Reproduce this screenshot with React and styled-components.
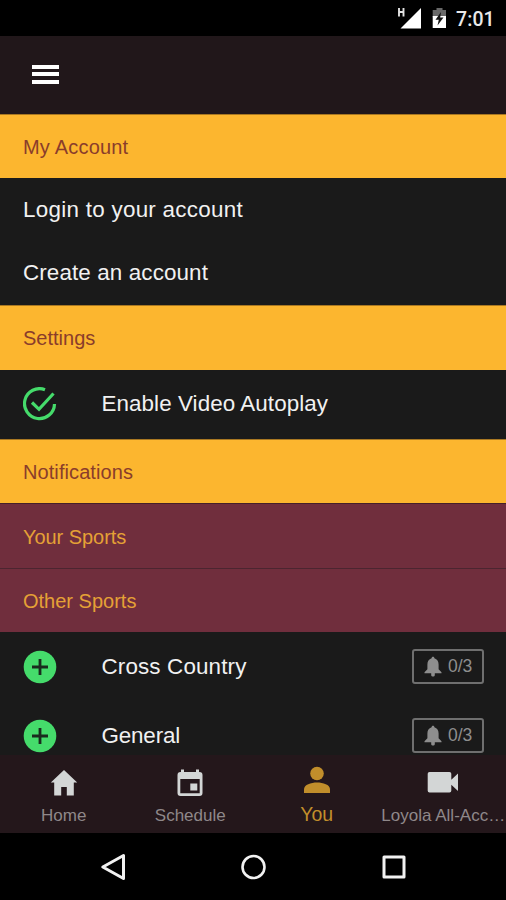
import React from "react";
import styled, { createGlobalStyle } from "styled-components";

const GlobalStyle = createGlobalStyle`
  * { box-sizing: border-box; }
  html, body { margin: 0; padding: 0; background: #000; }
  body { overflow: hidden; font-family: "Liberation Sans", Arial, sans-serif; }
  svg { display: block; flex: none; }
`;

const Screen = styled.div`
  width: 506px;
  height: 900px;
  display: flex;
  flex-direction: column;
  overflow: hidden;
  background: #1a1a1a;
`;

const StatusBar = styled.div`
  flex: none;
  height: 36px;
  padding: 0 11px 0 0;
  display: flex;
  justify-content: flex-end;
  align-items: center;
  background: #000;
`;

const StatusIcons = styled.span`
  display: flex;
  align-items: center;
  gap: 9px;
`;

const Clock = styled.span`
  width: 39px;
  margin-left: 9px;
  padding-top: 3px;
  font: 500 19.5px/24px Roboto, sans-serif;
  letter-spacing: 0.1px;
  color: #e9e9e9;
  white-space: nowrap;
`;

const AppBar = styled.header`
  flex: none;
  height: 78px;
  padding: 0 32px 2px;
  display: flex;
  align-items: center;
  background: #21171a;
`;

const MenuButton = styled.button`
  width: 27px;
  height: 19px;
  padding: 0;
  border: 0;
  background: none;
  display: flex;
  flex-direction: column;
  justify-content: space-between;
`;

const MenuBar = styled.span`
  width: 100%;
  height: 4px;
  background: #fff;
`;

const Content = styled.main`
  flex: 1;
  min-height: 0;
  overflow: hidden;
`;

const SectionHeader = styled.h2`
  margin: 0;
  height: ${(p) => p.$height}px;
  padding: ${(p) => p.$top || 0}px 23px 0;
  display: flex;
  align-items: center;
  border-top: 1px solid ${(p) => p.$edge || "#a97822"};
  background: #fcb62f;
  font-size: 20px;
  font-weight: 400;
  letter-spacing: ${(p) => p.$spacing || 0}px;
  color: #8a3d2b;
`;

const SportsHeader = styled(SectionHeader)`
  background: #702e3d;
  color: #e5a136;
`;

const Row = styled.div`
  height: ${(p) => p.$height}px;
  padding: 0 22px ${(p) => p.$bottom || 0}px 23px;
  display: flex;
  align-items: center;
  background: #1a1a1a;
`;

const RowIcon = styled.span`
  width: 78.5px;
  flex: none;
`;

const RowLabel = styled.span`
  flex: 1;
  font-size: 22.4px;
  line-height: 28px;
  letter-spacing: ${(p) => p.$spacing || 0}px;
  color: #f1f1f1;
  white-space: nowrap;
`;

const AlertBadge = styled.span`
  width: 72px;
  height: 35px;
  border: 2px solid #6f6f6f;
  border-radius: 3px;
  display: flex;
  align-items: center;
  padding-left: 10px;
  gap: 6px;
  font-size: 17.5px;
  color: #8e8e8e;
`;

const TabBar = styled.nav`
  flex: none;
  height: 78px;
  display: grid;
  grid-template-columns: repeat(4, 126.5px);
  background: #24171b;
`;

const Tab = styled.div`
  min-width: 0;
  padding: ${(p) => (p.$active ? 7 : 14)}px 0 0 1px;
  display: flex;
  flex-direction: column;
  align-items: center;
  color: ${(p) => (p.$active ? "#c18e2b" : "#d3d6d6")};
`;

const TabLabel = styled.span`
  margin-top: ${(p) => (p.$active ? 10 : 8)}px;
  font-size: ${(p) => (p.$active ? 19.5 : 17)}px;
  line-height: 22px;
  color: ${(p) => (p.$active ? "#c18e2b" : "#8f888a")};
  white-space: nowrap;
`;

const SystemBar = styled.footer`
  flex: none;
  height: 67px;
  padding: 0 98px 0 99px;
  display: flex;
  align-items: center;
  justify-content: space-between;
  background: #000;
`;

const SignalIcon = () => (
  <svg width="26" height="24" viewBox="0 0 26 24">
    <path d="M24 2V22.5H3.500Z" fill="#fff" />
    <path d="M2 2v8.500M6.500 2v8.500M2 6h4.500" stroke="#e2e2e2" strokeWidth="1.900" fill="none" />
  </svg>
);

const BatteryIcon = () => (
  <svg width="15" height="22" viewBox="0 0 15 22">
    <path d="M4.500 1h6v2H14v7H.700V3h3.800Z" fill="#686868" />
    <path d="M.700 9H14v12H.700Z" fill="#fff" />
    <path d="M9 5 3.500 12.800h3.300L5.500 18.500l6-8H8.200Z" fill="#111" />
  </svg>
);

const CheckIcon = () => (
  <svg width="34" height="34" viewBox="0 0 34 34" fill="none" stroke="#45db6b" strokeWidth="3.200">
    <path d="M22 2.700A15 15 0 1 0 31.500 17" />
    <path d="m9 15.500 7 6.800L30.500 6.500" />
  </svg>
);

const PlusIcon = () => (
  <svg width="34" height="34" viewBox="0 0 34 34">
    <circle cx="17" cy="17" r="16.300" fill="#45db6b" />
    <path d="M17 9v16M9 17h16" stroke="#1a2a1e" strokeWidth="2.800" />
  </svg>
);

const BellIcon = () => (
  <svg width="18" height="21" viewBox="0 0 18 21" fill="#8e8e8e">
    <path d="M9 .800c.9 0 1.400.6 1.400 1.500C13.200 3.200 14.600 5.500 14.600 8.500v4.700l2.900 3v1H.500v-1l2.900-3V8.500C3.400 5.500 4.800 3.200 7.600 2.300 7.600 1.400 8.100.8 9 .8Z" />
    <path d="M7.200 17h3.600v2c0 2-3.600 2-3.600 0Z" />
  </svg>
);

const HomeIcon = () => (
  <svg width="28" height="28" viewBox="0 0 28 28" fill="currentColor">
    <path d="M14 1 0.800 13.500H4.200V26.500H11.200V18h5.600v8.500h7V13.500h3.400Z" />
  </svg>
);

const CalendarIcon = () => (
  <svg width="28" height="28" viewBox="0 0 28 28" fill="currentColor">
    <path
      fillRule="evenodd"
      d="M5 .500h3V3h12V.500h3V3h.500a3 3 0 0 1 3 3v18a3 3 0 0 1-3 3h-19a3 3 0 0 1-3-3V6a3 3 0 0 1 3-3H5ZM4.300 10v14.300h19.400V10ZM14.300 14.500h7V21.500h-7Z"
    />
  </svg>
);

const PersonIcon = () => (
  <svg width="28" height="31" viewBox="0 0 28 31" fill="currentColor">
    <circle cx="14" cy="11.500" r="6.800" />
    <path d="M1 31v-3.500C1 22.500 8 20.500 14 20.500s13 2 13 7V31Z" />
  </svg>
);

const VideoIcon = () => (
  <svg width="32" height="28" viewBox="0 0 32 28" fill="currentColor">
    <path d="M2.500 3h20A1.800 1.800 0 0 1 24.300 4.800v6L31 4.500v17.500l-6.700-6.300v6A1.800 1.800 0 0 1 22.500 23.500h-20A1.800 1.800 0 0 1 .700 21.700V4.800A1.800 1.800 0 0 1 2.500 3Z" />
  </svg>
);

const sports = [
  { name: "Cross Country", spacing: 0.15 },
  { name: "General", spacing: -0.15 },
];

const tabs = [
  { label: "Home", Icon: HomeIcon },
  { label: "Schedule", Icon: CalendarIcon },
  { label: "You", Icon: PersonIcon, active: true },
  { label: "Loyola All-Acc…", Icon: VideoIcon },
];

export default function App() {
  return (
    <>
      <GlobalStyle />
      <Screen>
        <StatusBar>
          <StatusIcons>
            <SignalIcon />
            <BatteryIcon />
          </StatusIcons>
          <Clock>7:01</Clock>
        </StatusBar>
        <AppBar>
          <MenuButton aria-label="Menu">
            <MenuBar />
            <MenuBar />
            <MenuBar />
          </MenuButton>
        </AppBar>
        <Content>
          <SectionHeader $height={64} $top={2} $spacing={0.2}>My Account</SectionHeader>
          <Row $height={64}>
            <RowLabel $spacing={0.28}>Login to your account</RowLabel>
          </Row>
          <Row $height={63} $bottom={2}>
            <RowLabel $spacing={0.12}>Create an account</RowLabel>
          </Row>
          <SectionHeader $height={65}>Settings</SectionHeader>
          <Row $height={69} $bottom={2}>
            <RowIcon><CheckIcon /></RowIcon>
            <RowLabel $spacing={0.08}>Enable Video Autoplay</RowLabel>
          </Row>
          <SectionHeader $height={64} $top={2} $spacing={0.08}>Notifications</SectionHeader>
          <SportsHeader $height={65} $edge="#45202a" $top={2} $spacing={-0.05}>Your Sports</SportsHeader>
          <SportsHeader $height={64} $edge="#4c2530" $top={2}>Other Sports</SportsHeader>
          {sports.map(({ name, spacing }) => (
            <Row key={name} $height={69}>
              <RowIcon><PlusIcon /></RowIcon>
              <RowLabel $spacing={spacing}>{name}</RowLabel>
              <AlertBadge>
                <BellIcon />
                0/3
              </AlertBadge>
            </Row>
          ))}
        </Content>
        <TabBar>
          {tabs.map(({ label, Icon, active }) => (
            <Tab key={label} $active={active}>
              <Icon />
              <TabLabel $active={active}>{label}</TabLabel>
            </Tab>
          ))}
        </TabBar>
        <SystemBar>
          <svg width="28" height="30" viewBox="0 0 28 30" fill="none" stroke="#f2f2f2" strokeWidth="3" strokeLinejoin="round">
            <path d="M24.500 3.500v23L3.800 15Z" />
          </svg>
          <svg width="28" height="28" viewBox="0 0 28 28" fill="none" stroke="#f2f2f2" strokeWidth="2.600">
            <circle cx="13.500" cy="14" r="11" />
          </svg>
          <svg width="28" height="28" viewBox="0 0 28 28" fill="none" stroke="#f2f2f2" strokeWidth="3" strokeLinejoin="round">
            <path d="M4 4h20v20H4Z" />
          </svg>
        </SystemBar>
      </Screen>
    </>
  );
}
